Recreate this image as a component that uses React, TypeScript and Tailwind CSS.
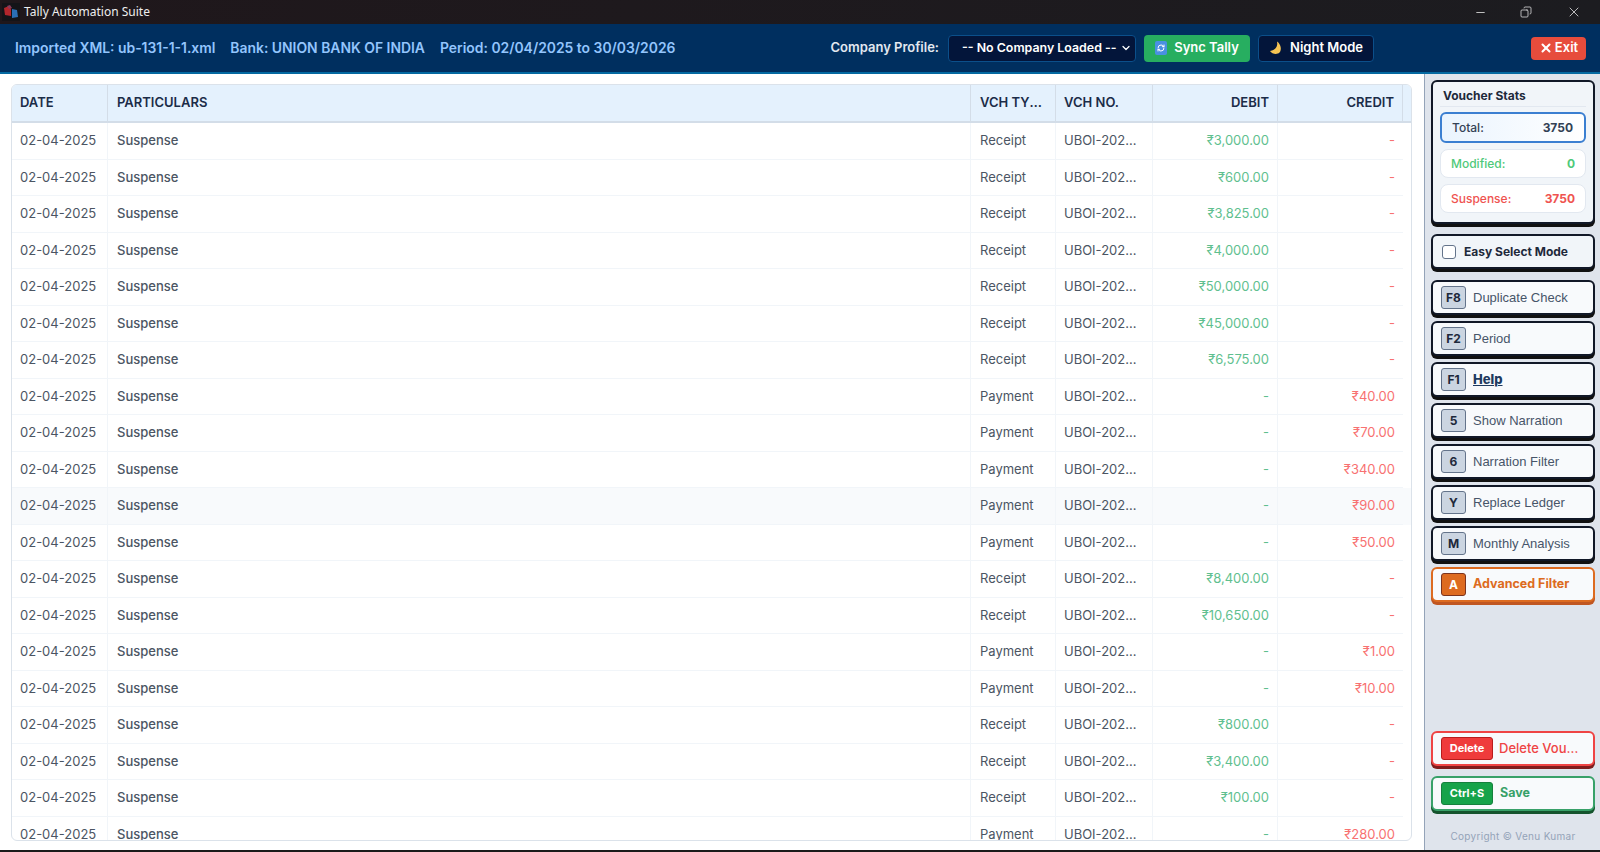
import { Minus, X, Copy, ChevronDown, RefreshCw } from 'lucide-react';

type Row = { type: 'Receipt' | 'Payment'; debit?: string; credit?: string };

const ROWS: Row[] = [
  { type: 'Receipt', debit: '₹3,000.00' },
  { type: 'Receipt', debit: '₹600.00' },
  { type: 'Receipt', debit: '₹3,825.00' },
  { type: 'Receipt', debit: '₹4,000.00' },
  { type: 'Receipt', debit: '₹50,000.00' },
  { type: 'Receipt', debit: '₹45,000.00' },
  { type: 'Receipt', debit: '₹6,575.00' },
  { type: 'Payment', credit: '₹40.00' },
  { type: 'Payment', credit: '₹70.00' },
  { type: 'Payment', credit: '₹340.00' },
  { type: 'Payment', credit: '₹90.00' },
  { type: 'Payment', credit: '₹50.00' },
  { type: 'Receipt', debit: '₹8,400.00' },
  { type: 'Receipt', debit: '₹10,650.00' },
  { type: 'Payment', credit: '₹1.00' },
  { type: 'Payment', credit: '₹10.00' },
  { type: 'Receipt', debit: '₹800.00' },
  { type: 'Receipt', debit: '₹3,400.00' },
  { type: 'Receipt', debit: '₹100.00' },
  { type: 'Payment', credit: '₹280.00' },
];

const SHORTCUTS = [
  { k: 'F8', label: 'Duplicate Check' },
  { k: 'F2', label: 'Period' },
  { k: 'F1', label: 'Help', help: true },
  { k: '5', label: 'Show Narration' },
  { k: '6', label: 'Narration Filter' },
  { k: 'Y', label: 'Replace Ledger' },
  { k: 'M', label: 'Monthly Analysis' },
];

function AppIcon() {
  return (
    <svg width="18" height="18" viewBox="0 0 18 18" className="shrink-0">
      <rect width="18" height="18" fill="#141418" />
      <path d="M2 5L7 3L9 6V13L3 12Z" fill="#b3262c" />
      <path d="M5 3L8 2L10 5L7 6Z" fill="#8a3a5a" />
      <path d="M10 6L15 7L16 14L10 15Z" fill="#2a6fb5" />
    </svg>
  );
}

function ShortcutButton({ k, label, help }: { k: string; label: string; help?: boolean }) {
  return (
    <div className="h-[35px] flex items-center pl-2 rounded-md border-2 border-[#111827] bg-[#f8fafc] shadow-[0_3px_0_#111]">
      <span className="w-[25px] h-[23px] flex items-center justify-center rounded-[3px] bg-[#cbd5e1] border border-[#64748b] text-[12px] font-bold text-[#1e293b]">
        {k}
      </span>
      {help ? (
        <span className="ml-[7px] text-[13px] font-extrabold underline text-[#1e3a5f]">{label}</span>
      ) : (
        <span className="ml-[7px] text-[13px] font-['Liberation_Sans',sans-serif] text-[#475569]">{label}</span>
      )}
    </div>
  );
}

export default function App() {
  return (
    <div className="h-[852px] w-[1600px] flex flex-col overflow-hidden bg-white font-['Inter',sans-serif] border-b-2 border-[#1a1a1a]">
      {/* Title bar */}
      <div className="h-[24px] shrink-0 flex items-center bg-gradient-to-r from-[#1f171b] to-[#1c1c20] text-white">
        <div className="pl-[2px]"><AppIcon /></div>
        <span className="ml-[4px] text-[12px] font-['Noto_Sans',sans-serif] text-[#eeeeee]">Tally Automation Suite</span>
        <div className="ml-auto flex items-center gap-[34px] pr-[18px] text-[#e5e5e5]">
          <Minus size={13} strokeWidth={1.5} className="-mr-[1px]" />
          <Copy size={12} strokeWidth={1.5} className="-scale-x-100" />
          <X size={16} strokeWidth={1.2} />
        </div>
      </div>

      {/* Header */}
      <header className="h-[50px] shrink-0 flex items-center pl-[15px] pr-[14px] bg-[#002f5f] border-b-2 border-[#0369a1]">
        <div className="flex items-center gap-[15px] text-[13.9px] font-semibold text-[#93c5fd]">
          <span>Imported XML: ub-131-1-1.xml</span>
          <span>Bank: UNION BANK OF INDIA</span>
          <span>Period: 02/04/2025 to 30/03/2026</span>
        </div>
        <span className="ml-auto text-[13px] font-semibold text-[#e2e8f0]">Company Profile:</span>
        <div className="ml-[9px] w-[188px] h-[27px] flex items-center justify-between pl-[13px] pr-[3px] rounded bg-[#03153a] border border-[#0b4f8a] text-[12.4px] font-semibold text-white whitespace-nowrap">
          <span>-- No Company Loaded --</span>
          <ChevronDown size={12} strokeWidth={2.5} />
        </div>
        <div className="ml-[8px] w-[106px] h-[27px] flex items-center justify-center gap-[7px] rounded bg-[#27ae60] text-[13px] font-semibold text-white">
          <span className="w-[12px] h-[14px] flex items-center justify-center rounded-[2px] bg-[#4a90e2]">
            <RefreshCw size={8} strokeWidth={3} />
          </span>
          Sync Tally
        </div>
        <div className="ml-[8px] w-[116px] h-[27px] flex items-center justify-center gap-[8px] rounded bg-[#03153a] border border-[#0b4f8a] text-[13px] font-semibold text-white">
          <svg width="13" height="14" viewBox="0 0 13 14">
            <path d="M8 0.5C9 5 7 9 1 10C3 13 8 14 10.5 11.5C13 9 12 3 8 0.5Z" fill="#f6c453" />
          </svg>
          Night Mode
        </div>
        <div className="ml-[157px] w-[55px] h-[23px] flex items-center justify-center gap-[2px] rounded bg-[#e74c3c] text-[13px] font-semibold text-white">
          <X size={14} strokeWidth={3.5} />
          Exit
        </div>
      </header>

      <div className="flex-1 min-h-0 flex">
        {/* Voucher table */}
        <main className="w-[1424px] shrink-0 pl-[11px] pr-[12px] pt-[10px] pb-[9px]">
          <div className="h-full overflow-hidden rounded-md border border-[#dbe2ea] bg-white">
            <table className="w-full table-fixed border-separate border-spacing-0 text-[13px]">
              <colgroup>
                <col className="w-[96px]" />
                <col />
                <col className="w-[85px]" />
                <col className="w-[97px]" />
                <col className="w-[125px]" />
                <col className="w-[125px]" />
                <col className="w-[8px]" />
              </colgroup>
              <thead>
                <tr className="h-[38px] bg-[#e4f1fd] text-[13px] text-[#1b2c48]">
                  <th className="pl-2 pr-2 text-left font-semibold border-r border-b-2 border-[#d3dde8]">DATE</th>
                  <th className="pl-[9px] pr-2 text-left font-semibold border-r border-b-2 border-[#d3dde8]">PARTICULARS</th>
                  <th className="pl-[9px] pr-[10px] text-left font-semibold border-r border-b-2 border-[#d3dde8] truncate">VCH TYPE</th>
                  <th className="pl-[8px] pr-2 text-left font-semibold border-r border-b-2 border-[#d3dde8]">VCH NO.</th>
                  <th className="px-2 text-right font-semibold border-r border-b-2 border-[#d3dde8]">DEBIT</th>
                  <th className="px-2 text-right font-semibold border-r border-b-2 border-[#d3dde8]">CREDIT</th>
                  <th className="border-b-2 border-[#d3dde8]" />
                </tr>
              </thead>
              <tbody>
                {ROWS.map((r, i) => (
                  <tr key={i} className={i === 10 ? 'bg-[#f8fafc]' : ''}>
                    <td className="px-2 py-2 border-r border-b border-[#f1f5f9] text-[#4b5563]">02-04-2025</td>
                    <td className="pl-[9px] pr-2 py-2 border-r border-b border-[#f1f5f9] font-medium text-[#4b5563]">Suspense</td>
                    <td className="pl-[9px] pr-2 py-2 border-r border-b border-[#f1f5f9] text-[#4b5563]">{r.type}</td>
                    <td className="pl-[8px] pr-2 py-2 border-r border-b border-[#f1f5f9] text-[#4b5563] truncate">UBOI-2025-000123</td>
                    <td className="px-2 py-2 border-r border-b border-[#f1f5f9] text-right text-[#5fbf8f]">{r.debit ?? '-'}</td>
                    <td className="px-2 py-2 border-b border-[#f1f5f9] text-right text-[#f87171]">{r.credit ?? '-'}</td>
                    <td />
                  </tr>
                ))}
              </tbody>
            </table>
          </div>
        </main>

        {/* Sidebar */}
        <aside className="flex-1 flex flex-col pl-[6px] pr-[5px] pt-[6px] bg-[#dfe4ec] border-l border-[#94a3b8]">
          <div className="h-[144px] rounded-md border-2 border-[#111827] bg-[#f1f5f9] shadow-[0_3px_0_#111] px-[7px] pt-[6px]">
            <div className="h-[19px] pl-[3px] pb-1 text-[12px] font-bold leading-[15px] text-[#1e293b] border-b border-[#e2e8f0]">
              Voucher Stats
            </div>
            <div className="mt-[5px] h-[31px] flex items-center justify-between pl-[10px] pr-[11px] rounded-md border-2 border-[#3b7fd1] bg-gradient-to-r from-[#eaf4fe] to-white text-[12px] text-[#334155]">
              <span className="font-medium">Total:</span>
              <span className="font-bold">3750</span>
            </div>
            <div className="mt-[6px] h-[29px] flex items-center justify-between pl-[10px] pr-[10px] rounded-lg border border-[#e2e8f0] bg-white text-[12px] text-[#4fc97a]">
              <span className="font-medium">Modified:</span>
              <span className="font-bold">0</span>
            </div>
            <div className="mt-[6px] h-[29px] flex items-center justify-between pl-[10px] pr-[10px] rounded-lg border border-[#e2e8f0] bg-white text-[12px] text-[#ef5350]">
              <span className="font-medium">Suspense:</span>
              <span className="font-bold">3750</span>
            </div>
          </div>

          <div className="mt-[10px] h-[35px] flex items-center pl-[9px] rounded-md border-2 border-[#111827] bg-[#f1f5f9] shadow-[0_3px_0_#111]">
            <span className="w-[14px] h-[14px] rounded-[3px] border border-[#64748b] bg-white" />
            <span className="ml-2 text-[12px] font-bold text-[#1e293b]">Easy Select Mode</span>
          </div>

          <div className="mt-[11px] flex flex-col gap-[6px]">
            {SHORTCUTS.map(s => (
              <ShortcutButton key={s.k} {...s} />
            ))}
            <div className="h-[35px] flex items-center pl-2 rounded-md border-2 border-[#dd6b20] bg-[#f8fafc] shadow-[0_3px_0_#c05621]">
              <span className="w-[25px] h-[23px] flex items-center justify-center rounded-[3px] bg-[#dd6b20] border border-[#7b341e] text-[12px] font-bold text-white">
                A
              </span>
              <span className="ml-[7px] text-[12.5px] font-bold text-[#dd6b20]">Advanced Filter</span>
            </div>
          </div>

          <div className="mt-auto h-[35px] flex items-center pl-2 rounded-md border-2 border-[#ef4444] bg-[#f8fafc] shadow-[0_3px_0_#7f1d1d]">
            <span className="w-[52px] h-[23px] flex items-center justify-center rounded-[3px] bg-[#ef3b3b] border border-[#b91c1c] text-[11px] font-bold text-white">
              Delete
            </span>
            <span className="ml-[6px] w-[82px] truncate text-[13px] font-medium text-[#ef4444]">Delete Voucher</span>
          </div>
          <div className="mt-[10px] h-[35px] flex items-center pl-2 rounded-md border-2 border-[#38a169] bg-[#f8fafc] shadow-[0_3px_0_#14532d]">
            <span className="w-[52px] h-[23px] flex items-center justify-center rounded-[3px] bg-[#16a34a] border border-[#15803d] text-[11px] font-bold text-white">
              Ctrl+S
            </span>
            <span className="ml-[7px] text-[12.5px] font-bold text-[#38a169]">Save</span>
          </div>
          <div className="mt-[18px] mb-[6px] text-center text-[10px] tracking-[0.3px] text-[#94a3b8]">Copyright © Venu Kumar</div>
        </aside>
      </div>
    </div>
  );
}
